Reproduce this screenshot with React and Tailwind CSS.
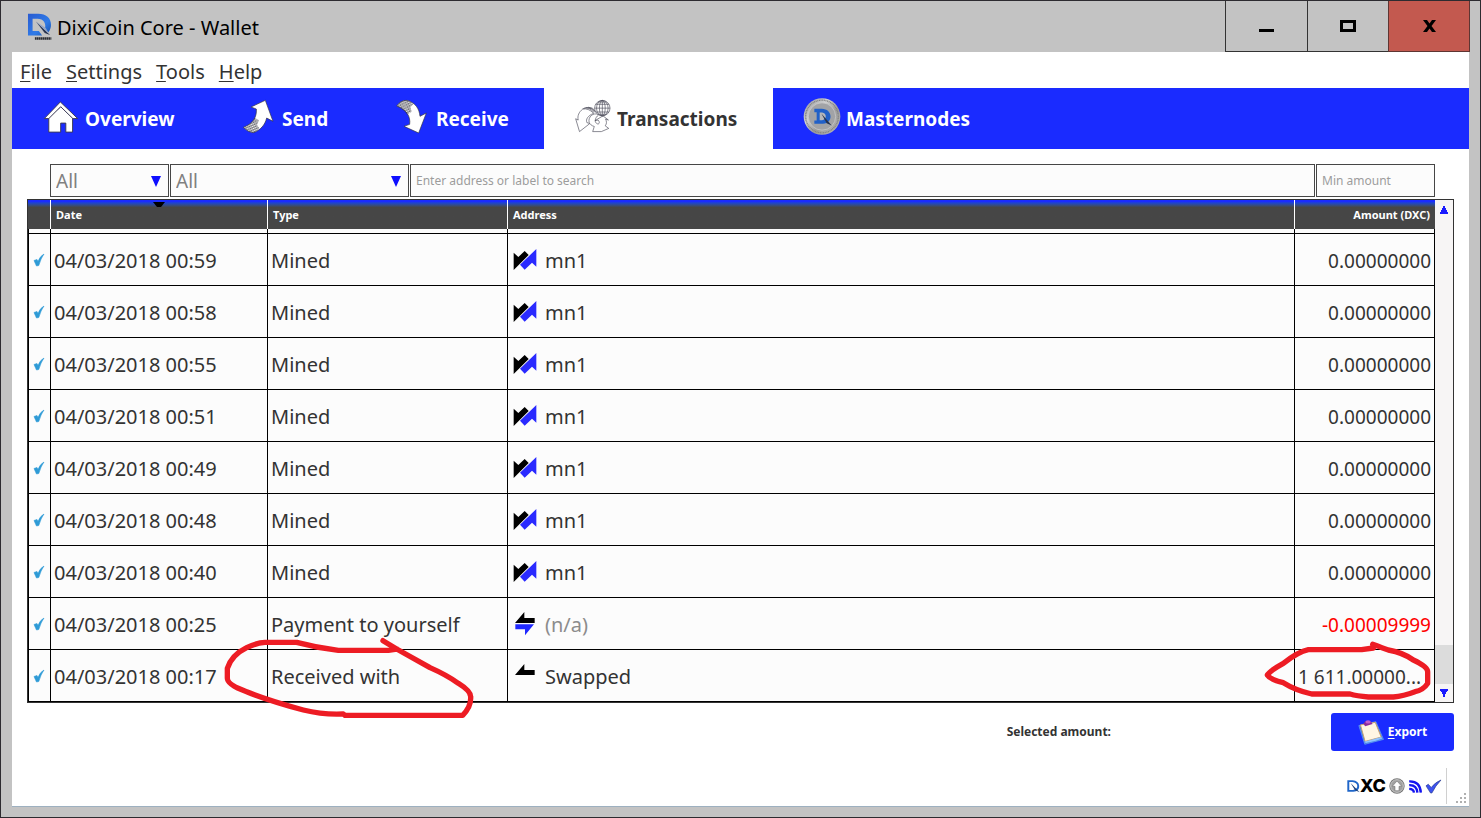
import React, { useState } from 'react';

const TABS = [
    { id: 'overview', label: 'Overview', width: 'w-[197px]', Icon: HomeIcon },
    { id: 'send', label: 'Send', width: 'w-[154px]', Icon: SendIcon },
    { id: 'receive', label: 'Receive', width: 'w-[181px]', Icon: ReceiveIcon },
    { id: 'transactions', label: 'Transactions', width: 'w-[229px]', Icon: TransactionsIcon },
    { id: 'masternodes', label: 'Masternodes', width: 'w-[229px]', Icon: CoinIcon },
];

const ROWS = [
    { date: '04/03/2018 00:59', type: 'Mined', kind: 'mined', address: 'mn1', amount: '0.00000000' },
    { date: '04/03/2018 00:58', type: 'Mined', kind: 'mined', address: 'mn1', amount: '0.00000000' },
    { date: '04/03/2018 00:55', type: 'Mined', kind: 'mined', address: 'mn1', amount: '0.00000000' },
    { date: '04/03/2018 00:51', type: 'Mined', kind: 'mined', address: 'mn1', amount: '0.00000000' },
    { date: '04/03/2018 00:49', type: 'Mined', kind: 'mined', address: 'mn1', amount: '0.00000000' },
    { date: '04/03/2018 00:48', type: 'Mined', kind: 'mined', address: 'mn1', amount: '0.00000000' },
    { date: '04/03/2018 00:40', type: 'Mined', kind: 'mined', address: 'mn1', amount: '0.00000000' },
    { date: '04/03/2018 00:25', type: 'Payment to yourself', kind: 'self', address: '(n/a)', amount: '-0.00009999' },
    { date: '04/03/2018 00:17', type: 'Received with', kind: 'received', address: 'Swapped', amount: '1 611.00000...', marked: true },
];

function LogoIcon() {
    return (
        <svg viewBox="0 0 76 84" className="h-7 w-[25px]" aria-hidden="true">
            <defs>
                <linearGradient id="logoBlue" x1="0" y1="0" x2="1" y2="1">
                    <stop offset="0" stopColor="#2a5bd0" />
                    <stop offset="0.6" stopColor="#2f7be8" />
                    <stop offset="1" stopColor="#174fa8" />
                </linearGradient>
            </defs>
            <path d="M3 2H34C58 2 73 15 73 36C73 44 70 52 65 58L54 50C60 31 50 17 32 17H17V54H36L46 68H3Z" fill="url(#logoBlue)" />
            <path d="M27 25L70 66L54 60Z" fill="#27334f" />
            <path d="M27 25L57 45L68 64Z" fill="#8fa3c8" />
            <path d="M24 77H74" fill="none" stroke="#2a2d33" strokeWidth="7" strokeDasharray="5 1" />
        </svg>
    );
}

function HomeIcon() {
    return (
        <svg viewBox="126 297 112 102" className="h-[34px] w-9" aria-hidden="true">
            <path d="M144 350L181 316L218 350V395H197V367H181V395H144Z" fill="#fff" stroke="#3b3b55" strokeWidth="3" />
            <path d="M130 353L180 301L234 353H219L181 316L144 353Z" fill="#fff" stroke="#3b3b55" strokeWidth="3" strokeLinejoin="round" />
        </svg>
    );
}

function MeshPattern({ id }) {
    return (
        <defs>
            <pattern id={id} width="8" height="7" patternUnits="userSpaceOnUse" patternTransform="rotate(-25)">
                <path d="M0 3.5L4 0L8 3.5L4 7Z" fill="none" stroke="#22222c" strokeWidth="2" />
            </pattern>
        </defs>
    );
}

function SendIcon() {
    return (
        <svg viewBox="30 46 102 105" className="h-[35px] w-[34px]" aria-hidden="true">
            <MeshPattern id="sendMesh" />
            <path d="M103 50L60 70L76 76C78 100 66 120 37 131Q52 147 67 147C88 140 102 124 107 103L126 113Z" fill="#fff" stroke="#33333f" strokeWidth="2" />
            <path d="M37 131C56 124 66 113 71 102L84 110L78 124L85 134Q78 144 67 147Q52 147 37 131Z" fill="url(#sendMesh)" />
        </svg>
    );
}

function ReceiveIcon() {
    return (
        <svg viewBox="494 45 102 105" className="h-[35px] w-[34px]" aria-hidden="true">
            <MeshPattern id="receiveMesh" />
            <path d="M499 66Q511 48 530 49C555 56 567 74 569 97L588 87L565 147L521 127L538 121C541 98 530 78 499 66Z" fill="#fff" stroke="#33333f" strokeWidth="2" />
            <path d="M499 66Q511 48 530 49Q541 52 549 60L540 70L544 83L530 92Q521 75 499 66Z" fill="url(#receiveMesh)" />
        </svg>
    );
}

function TransactionsIcon() {
    return (
        <svg viewBox="102 37 112 106" className="h-[35px] w-9" fill="none" stroke="#4a4a58" strokeWidth="2" aria-hidden="true">
            <path d="M126 67C114 76 109 88 112 101L104 97L116 137L148 112L139 109C135 99 141 88 160 80Q143 63 126 67Z" fill="#fff" />
            <path d="M126 66Q145 57 161 78M131 64Q150 58 163 76M137 62Q154 60 165 74M143 61Q157 61 167 74" />
            <path d="M176 84C158 76 142 92 146 108C148 114 154 119 162 121L157 137H184L207 127L196 119C202 112 200 104 197 98L206 101L189 88L164 103L174 101C180 108 178 114 172 113C162 109 162 96 176 84Z" fill="#fff" />
            <circle cx="187" cy="64" r="24" fill="#fff" />
            <ellipse cx="187" cy="64" rx="9" ry="24" />
            <ellipse cx="187" cy="64" rx="18" ry="24" />
            <path d="M187 40V88M163 64H211M166 52H208M166 76H208M174 45H200M174 83H200" />
        </svg>
    );
}

function CoinIcon() {
    return (
        <svg viewBox="0 0 114 110" className="h-[37px] w-[38px] shrink-0" aria-hidden="true">
            <defs>
                <linearGradient id="coinSilver" x1="0" y1="0" x2="1" y2="1">
                    <stop offset="0" stopColor="#8c8e92" />
                    <stop offset="0.35" stopColor="#d2d2d2" />
                    <stop offset="0.6" stopColor="#9b9b9b" />
                    <stop offset="1" stopColor="#bdbdbd" />
                </linearGradient>
            </defs>
            <circle cx="57" cy="55" r="55" fill="url(#coinSilver)" />
            <circle cx="57" cy="55" r="49" fill="none" stroke="#808080" strokeWidth="4" strokeDasharray="3 2" />
            <circle cx="57" cy="55" r="41" fill="#a2a3a6" stroke="#d0d0d0" strokeWidth="2" />
            <path d="M34 32H56C90 32 92 76 60 77H34V67H41V42H34Z" fill="#2160c8" />
            <path d="M50 43H57C72 44 72 65 57 66H50Z" fill="#b5b7ba" />
            <path d="M55 46L86 82L71 75Z" fill="#26344f" />
        </svg>
    );
}

function ConfirmedIcon() {
    return (
        <svg viewBox="0 0 12 14" className="h-[14px] w-3" aria-hidden="true">
            <path d="M1 7.5L4 6.5L5 8.5Q7 3 11 1Q8 5 5.8 12.5L3.5 13Z" fill="#2e9bd6" stroke="#2e9bd6" strokeWidth="0.6" />
        </svg>
    );
}

function AddressIcon({ kind }) {
    if (kind === 'mined') {
        return (
            <svg viewBox="10 6 72 72" className="h-6 w-6 shrink-0" aria-hidden="true">
                <path d="M12 20L26 33L45 15L57 27L12 72Z" fill="#000" />
                <path d="M31 56L80 9V62L67 50L45 71Z" fill="#2a2aff" />
            </svg>
        );
    }
    return (
        <svg viewBox="70 184 72 72" className="h-6 w-6 shrink-0" aria-hidden="true">
            <path d="M104 184V202H135V217H76Z" fill="#000" />
            {kind === 'self' && <path d="M77 221H133L106 254V236H77Z" fill="#2029ff" />}
        </svg>
    );
}

function ClipboardIcon() {
    return (
        <svg viewBox="350 357 78 76" className="h-[25px] w-[26px]" aria-hidden="true">
            <path d="M352 374L404 362L427 416L370 431Z" fill="#3f7fe0" stroke="#6aa5f5" strokeWidth="2" strokeLinejoin="round" />
            <path d="M357 372L402 364L420 409L371 422Z" fill="#fff6e4" stroke="#c9a06e" strokeWidth="3" />
            <path d="M368 424L374 427L404 420L424 413L420 409L371 422Z" fill="#8fc2ff" />
            <path d="M366 368L373 360H387L394 369L371 376Z" fill="#8c2c9c" />
            <ellipse cx="380" cy="363" rx="8" ry="5" fill="#c05fcc" />
        </svg>
    );
}

function DxcIcon() {
    return (
        <svg viewBox="0 0 40 42" className="h-[14px] w-[13px]" aria-hidden="true">
            <path d="M4 6H17C38 8 42 32 19 36H4Z" fill="none" stroke="#1f66c9" strokeWidth="6" />
            <path d="M11 12L39 40L25 34Z" fill="#1b3f7a" />
        </svg>
    );
}

function UpIcon() {
    return (
        <svg viewBox="0 0 48 48" className="h-4 w-4" aria-hidden="true">
            <circle cx="24" cy="24" r="23" fill="#777" />
            <circle cx="24" cy="24" r="19" fill="#a0a0a0" stroke="#c8c8c8" strokeWidth="3" />
            <path d="M24 9L38 25H30V38H18V25H10Z" fill="#fff" stroke="#666" strokeWidth="1.5" />
        </svg>
    );
}

function SignalIcon() {
    return (
        <svg viewBox="0 0 40 38" className="h-[13px] w-[14px]" fill="none" stroke="#1414f0" strokeWidth="7" aria-hidden="true">
            <path d="M3 4Q35 3 37 37" />
            <path d="M3 15Q25 14 27 37" />
            <path d="M3 26Q16 26 17 37" />
        </svg>
    );
}

function SyncedIcon() {
    return (
        <svg viewBox="0 0 50 46" className="h-[15px] w-[17px]" aria-hidden="true">
            <path d="M2 21L9 16L18 26Q30 10 48 3Q30 22 20 43H16Z" fill="#3d52f0" stroke="#2a3c8c" strokeWidth="2" strokeLinejoin="round" />
        </svg>
    );
}

function TypeMark() {
    return (
        <svg viewBox="60 99 780 273" className="pointer-events-none absolute -top-[17px] -left-12 z-10 h-[91px] w-[260px] max-w-none" fill="none" stroke="#ed1c24" strokeWidth="16" strokeLinecap="round" strokeLinejoin="round" aria-hidden="true">
            <path d="M549 122L590 147Q640 175 690 203Q740 225 775 250Q812 273 812 290Q814 320 788 346H435L430 342Q370 345 310 330Q200 300 140 275Q82 255 82 235V205Q95 165 140 143Q170 128 195 127H290Q350 143 415 151H565L590 147" />
        </svg>
    );
}

function AmountMark() {
    return (
        <svg viewBox="66 120 516 189" className="pointer-events-none absolute -top-[10px] -left-[33px] z-10 h-[63px] w-[172px] max-w-none" fill="none" stroke="#ed1c24" strokeWidth="16" strokeLinecap="round" strokeLinejoin="round" aria-hidden="true">
            <path d="M398 133Q430 145 445 150Q490 158 520 180Q563 200 563 215V250Q550 270 525 275Q490 288 460 291H385Q350 288 330 282H215Q165 270 130 248Q90 238 82 225Q90 212 130 190Q175 155 205 149H365L400 144" />
        </svg>
    );
}

function FilterSelect({ label, options, className }) {
    return (
        <div className={`relative ${className}`}>
            <select
                aria-label={label}
                className="h-[33px] w-full appearance-none border border-[#464646] bg-[#fcfcfc] pl-[5px] text-[19px] leading-6 text-[#808080] outline-none"
            >
                {options.map((option) => (
                    <option key={option}>{option}</option>
                ))}
            </select>
            <svg viewBox="0 0 10 11" className="pointer-events-none absolute top-3 right-2 h-[11px] w-[10px]" aria-hidden="true">
                <path d="M0 0H10L5 11Z" fill="#0f0fff" />
            </svg>
        </div>
    );
}

function TitleBar() {
    return (
        <header className="flex h-[51px] items-center">
            <div className="flex flex-1 items-center gap-[5px] pl-[26px]">
                <LogoIcon />
                <h1 className="pt-[2px] text-[20px] leading-7 text-black">DixiCoin Core - Wallet</h1>
            </div>
            <div className="mr-[10px] flex h-[51px] self-start">
                <button aria-label="Minimize" className="flex w-[83px] items-center justify-center border-x border-b border-[#333]">
                    <svg viewBox="0 0 15 18" className="h-[18px] w-[15px]" aria-hidden="true">
                        <path d="M0 12H15V15H0Z" />
                    </svg>
                </button>
                <button aria-label="Maximize" className="flex w-20 items-center justify-center border-b border-[#333]">
                    <svg viewBox="0 0 16 12" className="h-3 w-4" aria-hidden="true">
                        <path d="M1.5 1.5H14.5V10.5H1.5Z" fill="none" stroke="#000" strokeWidth="3" />
                    </svg>
                </button>
                <button aria-label="Close" className="flex w-[82px] items-center justify-center border border-t-0 border-[#5e3532] bg-[#c3594f]">
                    <svg viewBox="0 0 13 12" className="h-3 w-[13px]" aria-hidden="true">
                        <path d="M0 0H4L6.500 3.500L9 0H13L8.500 6L13 12H9L6.500 8.500L4 12H0L4.500 6Z" />
                    </svg>
                </button>
            </div>
        </header>
    );
}

function MenuBar() {
    return (
        <nav className="flex h-9 items-center gap-[14px] pt-1 pl-2 text-[20px] leading-7 text-[#333]">
            {['File', 'Settings', 'Tools', 'Help'].map((item) => (
                <button key={item}>
                    <span className="underline decoration-1 underline-offset-2">{item[0]}</span>
                    {item.slice(1)}
                </button>
            ))}
        </nav>
    );
}

function TransactionTable() {
    return (
        <table className="w-full table-fixed border-separate border-spacing-0 text-left text-[20px] leading-7 text-[#333]">
            <colgroup>
                <col className="w-[23px]" />
                <col className="w-[217px]" />
                <col className="w-60" />
                <col />
                <col className="w-[140px]" />
            </colgroup>
            <thead>
                <tr className="h-[29px] bg-linear-to-b from-[#1a2bff] from-5% to-[#464646] to-25% text-[11px] leading-4 font-bold text-white">
                    <th className="border-r border-white" aria-label="Status" />
                    <th className="relative border-r border-white pl-[5px]">
                        Date
                        <svg viewBox="0 0 12 5" className="absolute top-[2px] left-1/2 h-[5px] w-3 -translate-x-1/2" aria-hidden="true">
                            <path d="M0 0H12L8 5H4Z" fill="#000" />
                        </svg>
                    </th>
                    <th className="border-r border-white pl-[5px]">Type</th>
                    <th className="border-r border-white pl-[5px]">Address</th>
                    <th className="pr-[5px] text-right">Amount (DXC)</th>
                </tr>
            </thead>
            <tbody>
                {/* bottom edge of the row scrolled under the header */}
                <tr className="h-[5px]" aria-hidden="true">
                    <td className="border-x border-b border-black" />
                    <td className="border-r border-b border-black" />
                    <td className="border-r border-b border-black" />
                    <td className="border-r border-b border-black" />
                    <td className="border-r border-b border-black" />
                </tr>
                {ROWS.map((row) => (
                    <tr key={row.date} className="h-[52px]">
                        <td className="border-x border-b border-black pl-1">
                            <ConfirmedIcon />
                        </td>
                        <td className="border-r border-b border-black pt-[2px] pl-[3px] whitespace-nowrap">{row.date}</td>
                        <td className="relative border-r border-b border-black pt-[2px] pl-[3px] whitespace-nowrap">
                            {row.type}
                            {row.marked && <TypeMark />}
                        </td>
                        <td className="border-r border-b border-black pl-[5px]">
                            <div className={`flex items-center gap-2 ${row.kind === 'self' ? 'text-[#8c8c8c]' : ''}`}>
                                <AddressIcon kind={row.kind} />
                                <span className="pt-[2px]">{row.address}</span>
                            </div>
                        </td>
                        <td
                            className={`relative border-r border-b border-black px-[3px] pt-[2px] text-[19px] whitespace-nowrap ${row.marked ? 'text-left' : 'text-right'} ${row.kind === 'self' ? 'text-[#ff0000]' : ''}`}
                        >
                            {row.amount}
                            {row.marked && <AmountMark />}
                        </td>
                    </tr>
                ))}
            </tbody>
        </table>
    );
}

function ScrollBar() {
    return (
        <div className="flex w-[18px] shrink-0 flex-col bg-[#f7f5f5]">
            <button aria-label="Scroll up" className="flex h-5 items-center justify-center">
                <svg viewBox="0 0 8 8" className="h-2 w-2" aria-hidden="true">
                    <path d="M3 0H5V2H6V4H7V6H8V8H0V6H1V4H2V2H3Z" fill="#1a1aff" />
                </svg>
            </button>
            <div className="flex flex-1 flex-col justify-end">
                <div className="h-[39px] bg-[#dcdcdc]" />
            </div>
            <button aria-label="Scroll down" className="flex h-[18px] items-center justify-center">
                <svg viewBox="0 0 8 8" className="h-2 w-2" aria-hidden="true">
                    <path d="M0 0H8V2H7V3H6V5H5V8H3V5H2V3H1V2H0Z" fill="#1a1aff" />
                </svg>
            </button>
        </div>
    );
}

function StatusBar() {
    return (
        <footer className="flex items-center justify-end">
            <div className="flex items-center gap-[3px] pr-1">
                <div className="flex items-center">
                    <DxcIcon />
                    <span className="font-['Inter',sans-serif] text-[18px] leading-5 font-extrabold text-black">XC</span>
                </div>
                <UpIcon />
                <SignalIcon />
                <SyncedIcon />
            </div>
            <div className="h-9 w-px bg-[#d0d0d0]" />
            <svg viewBox="0 0 11 11" className="mr-[2px] ml-[9px] h-[11px] w-[11px] self-end" fill="#b0b0b0" aria-hidden="true">
                <path d="M8 0h2v2h-2zM8 4h2v2h-2zM4 4h2v2h-2zM8 8h2v2h-2zM4 8h2v2h-2zM0 8h2v2h-2z" />
            </svg>
        </footer>
    );
}

function App() {
    const [active, setActive] = useState('transactions');

    return (
        <div className="flex min-h-screen flex-col border border-[#2d2b30] bg-[#c3c3c3] font-['Noto_Sans','Open_Sans',sans-serif]">
            <TitleBar />
            <main className="mx-[11px] mb-[10px] flex flex-1 flex-col border-b border-[#9db0c0] bg-white">
                <MenuBar />
                <div role="tablist" className="flex h-[61px] bg-[#1a2bff]">
                    {TABS.map(({ id, label, width, Icon }) => (
                        <button
                            key={id}
                            role="tab"
                            aria-selected={active === id}
                            onClick={() => setActive(id)}
                            className={`flex items-center gap-[6px] pl-[31px] text-[19px] leading-6 font-bold ${width} ${active === id ? 'bg-white text-[#333]' : 'text-white'}`}
                        >
                            <span className="flex w-9 justify-center pb-1">
                                <Icon />
                            </span>
                            {label}
                        </button>
                    ))}
                </div>

                <section className="px-[15px] pt-[15px]">
                    <div className="mr-[19px] mb-[2px] ml-[23px] flex gap-px">
                        <FilterSelect label="Date range" options={['All', 'Today', 'This week', 'This month']} className="w-[119px]" />
                        <FilterSelect label="Transaction type" options={['All', 'Received with', 'Sent to', 'Mined']} className="w-[239px]" />
                        <input
                            type="text"
                            aria-label="Search"
                            placeholder="Enter address or label to search"
                            className="h-[33px] min-w-0 flex-1 border border-[#464646] bg-[#fcfcfc] px-[5px] text-[12px] outline-none placeholder:text-[#9c9c9c]"
                        />
                        <input
                            type="text"
                            aria-label="Min amount"
                            placeholder="Min amount"
                            className="h-[33px] w-[119px] border border-[#464646] bg-[#fcfcfc] px-[5px] text-[12px] outline-none placeholder:text-[#9c9c9c]"
                        />
                    </div>

                    <div className="flex border border-[#333] bg-[#fcfcfc]">
                        <div className="min-w-0 flex-1">
                            <TransactionTable />
                        </div>
                        <ScrollBar />
                    </div>

                    <div className="mt-[10px] flex items-center justify-end gap-[220px]">
                        <span className="text-[12px] leading-4 font-bold text-[#333]">Selected amount:</span>
                        <button className="flex h-[38px] w-[123px] items-center justify-center gap-1 rounded-[3px] bg-[#1a2bff] text-[12px] leading-4 font-bold text-white">
                            <ClipboardIcon />
                            <span>
                                <span className="underline underline-offset-2">E</span>xport
                            </span>
                        </button>
                    </div>
                </section>

                <div className="mt-auto pb-[2px]">
                    <StatusBar />
                </div>
            </main>
        </div>
    );
}

export default App;
